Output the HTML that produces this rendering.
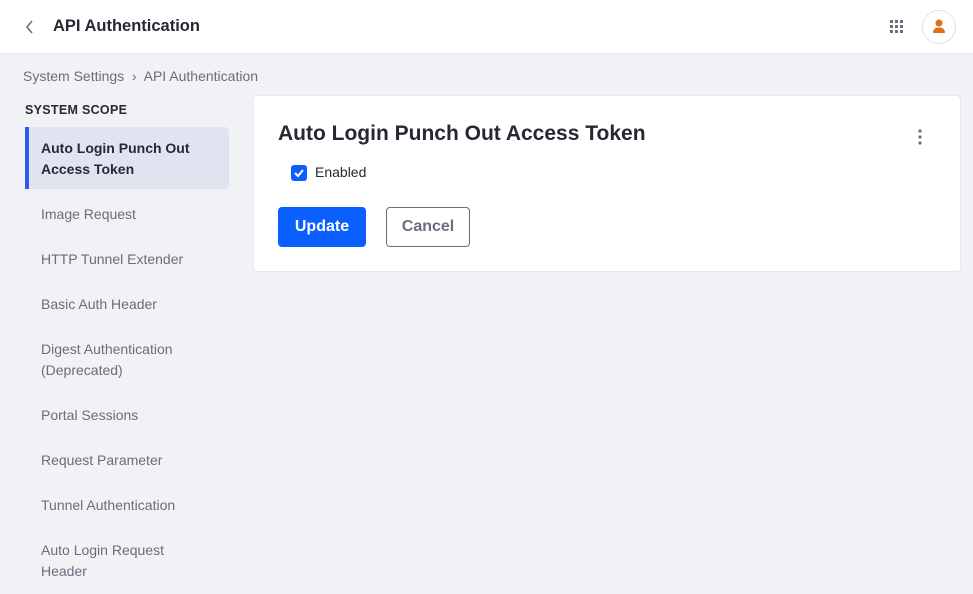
<!DOCTYPE html>
<html><head><style>
*{margin:0;padding:0;box-sizing:border-box}
body{width:973px;height:594px;overflow:hidden;background:#f1f2f5;font-family:"Liberation Sans",sans-serif;color:#272833;position:relative}
.top{position:absolute;left:0;top:0;width:973px;height:54px;background:#fff;border-bottom:1px solid #e7e7ed}
.top h1{position:absolute;left:53px;top:17px;font-size:16.5px;font-weight:bold;color:#272833}
.back{position:absolute;left:22px;top:18px}
.grid{position:absolute;left:890px;top:20px;width:13px;height:13px;display:grid;grid-template-columns:repeat(3,3px);gap:2px}
.grid i{width:3px;height:3px;background:#6b6c7e;display:block}
.av{position:absolute;left:922px;top:10px;width:34px;height:34px;border:1px solid #e1e1e6;border-radius:50%;background:#fff}
.bc{position:absolute;left:23px;top:68px;font-size:14px;color:#6b6c7e}
.scope{position:absolute;left:25px;top:103px;font-size:12.5px;font-weight:bold;letter-spacing:.3px;color:#272833}
.nav{position:absolute;left:25px;top:127px;width:204px}
.nav div{font-size:14px;color:#6b6c7e;padding:0 16px;line-height:21px}
.act{background:#e0e4f1;border-left:4px solid #2e5aef;border-radius:0 4px 4px 0;padding:11px 12px 10px!important;color:#272833!important;font-weight:bold;height:62px}
.card{position:absolute;left:253px;top:95px;width:708px;height:177px;background:#fff;border:1px solid #e7e7ed;border-radius:4px}
.card h2{position:absolute;left:24px;top:26px;font-size:21px;font-weight:bold;color:#272833}
.cb{position:absolute;left:37px;top:69px;width:16px;height:16px;background:#0b5fff;border-radius:3px}
.en{position:absolute;left:61px;top:68px;font-size:14px}
.up{position:absolute;left:24px;top:111px;width:88px;height:40px;background:#0b5fff;color:#fff;border-radius:4px;font-size:16px;font-weight:bold;text-align:center;line-height:40px}
.ca{position:absolute;left:132px;top:111px;width:84px;height:40px;border:1px solid #6b6c7e;color:#6b6c7e;border-radius:4px;font-size:16px;font-weight:bold;text-align:center;line-height:38px}
.dots{position:absolute;left:664px;top:32px}
</style></head><body>
<div class="top">
<svg class="back" width="16" height="18" viewBox="0 0 16 18"><path d="M10 3 L5 9 L10 15" fill="none" stroke="#6b6c7e" stroke-width="1.6"/></svg>
<h1>API Authentication</h1>
<div class="grid"><i></i><i></i><i></i><i></i><i></i><i></i><i></i><i></i><i></i></div>
<div class="av"><svg width="34" height="34" viewBox="0 0 34 34" style="position:absolute;left:-1px;top:-1px"><circle cx="17" cy="13" r="3.5" fill="#e16d19"/><path d="M11 23 Q11 17.5 17 17.5 Q23 17.5 23 23 Z" fill="#e16d19"/></svg></div>
</div>
<div class="bc">System Settings &nbsp;›&nbsp; API Authentication</div>
<div class="scope">SYSTEM SCOPE</div>
<div class="nav">
<div class="act">Auto Login Punch Out Access Token</div>
<div style="margin-top:15px">Image Request</div>
<div style="margin-top:24px">HTTP Tunnel Extender</div>
<div style="margin-top:24px">Basic Auth Header</div>
<div style="margin-top:24px">Digest Authentication (Deprecated)</div>
<div style="margin-top:24px">Portal Sessions</div>
<div style="margin-top:24px">Request Parameter</div>
<div style="margin-top:24px">Tunnel Authentication</div>
<div style="margin-top:24px">Auto Login Request Header</div>
</div>
<div class="card">
<h2>Auto Login Punch Out Access Token</h2>
<svg class="dots" width="4" height="18" viewBox="0 0 4 18"><circle cx="2" cy="3" r="1.6" fill="#6b6c7e"/><circle cx="2" cy="9" r="1.6" fill="#6b6c7e"/><circle cx="2" cy="15" r="1.6" fill="#6b6c7e"/></svg>
<div class="cb"><svg width="16" height="16" viewBox="0 0 16 16"><path d="M4 8 L7 11 L12 5" fill="none" stroke="#fff" stroke-width="2"/></svg></div>
<div class="en">Enabled</div>
<div class="up">Update</div>
<div class="ca">Cancel</div>
</div>
</body></html>
